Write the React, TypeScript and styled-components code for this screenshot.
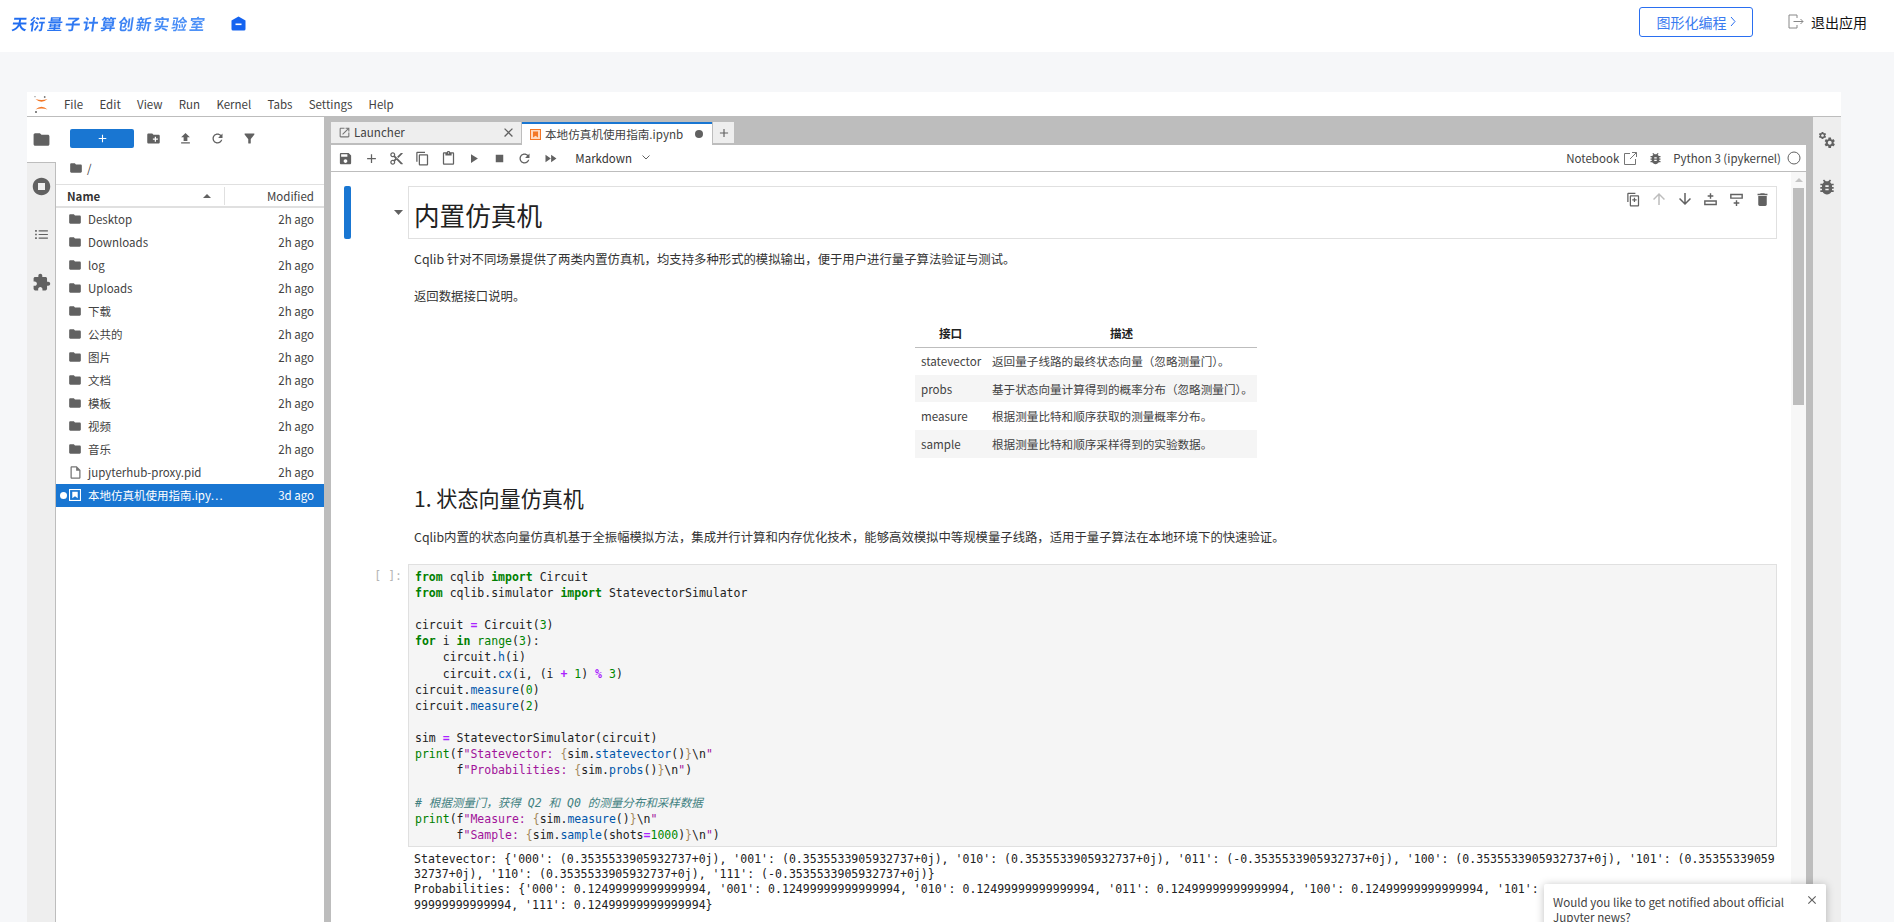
import React from 'react';
import styled, { createGlobalStyle } from 'styled-components';

const Global = createGlobalStyle`
  html, body { margin: 0; padding: 0; height: 100%; overflow: hidden; background: #f6f7f9; }
  body { font-family: "Noto Sans CJK SC", "Noto Sans", sans-serif; color: #424242; }
  #root { height: 100%; }
  * { box-sizing: border-box; }
`;

const P = {
  folder: 'M10 4H4c-1.1 0-1.99.9-1.99 2L2 18c0 1.1.9 2 2 2h16c1.1 0 2-.9 2-2V8c0-1.1-.9-2-2-2h-8l-2-2z',
  newFolder: 'M20 6h-8l-2-2H4c-1.11 0-1.99.89-1.99 2L2 18c0 1.11.89 2 2 2h16c1.11 0 2-.89 2-2V8c0-1.11-.89-2-2-2zm-1 8h-3v3h-2v-3h-3v-2h3V9h2v3h3v2z',
  upload: 'M9 16h6v-6h4l-7-7-7 7h4zm-4 2h14v2H5z',
  refresh: 'M17.65 6.35C16.2 4.9 14.21 4 12 4c-4.42 0-7.99 3.58-7.99 8s3.57 8 7.99 8c3.73 0 6.84-2.55 7.73-6h-2.08c-.82 2.33-3.04 4-5.65 4-3.31 0-6-2.69-6-6s2.69-6 6-6c1.66 0 3.14.69 4.22 1.78L13 11h7V4l-2.35 2.35z',
  filter: 'M4.25 5.61C6.27 8.2 10 13 10 13v6c0 .55.45 1 1 1h2c.55 0 1-.45 1-1v-6s3.72-4.8 5.74-7.39c.51-.66.04-1.61-.79-1.61H5.04c-.83 0-1.3.95-.79 1.61z',
  stopCircle: 'M12 2C6.48 2 2 6.48 2 12s4.48 10 10 10 10-4.48 10-10S17.52 2 12 2zm4 14H8V8h8v8z',
  list: 'M8 6h13v1.6H8zM8 11.2h13v1.6H8zM8 16.4h13v1.6H8zM3 5.6h2.4V8H3zM3 10.8h2.4v2.4H3zM3 16h2.4v2.4H3z',
  extension: 'M20.5 11H19V7c0-1.1-.9-2-2-2h-4V3.5C13 2.12 11.88 1 10.5 1S8 2.12 8 3.5V5H4c-1.1 0-1.99.9-1.99 2v3.8H3.5c1.49 0 2.7 1.21 2.7 2.7s-1.21 2.7-2.7 2.7H2V20c0 1.1.9 2 2 2h3.8v-1.5c0-1.49 1.21-2.7 2.7-2.7 1.49 0 2.7 1.21 2.7 2.7V22H17c1.1 0 2-.9 2-2v-4h1.5c1.38 0 2.5-1.12 2.5-2.5S21.88 11 20.5 11z',
  file: 'M14 2H6c-1.1 0-2 .9-2 2v16c0 1.1.9 2 2 2h12c1.1 0 2-.9 2-2V8l-6-6zm4 18H6V4h7v5h5v11z',
  launch: 'M19 19H5V5h7V3H5c-1.11 0-2 .9-2 2v14c0 1.1.89 2 2 2h14c1.1 0 2-.9 2-2v-7h-2v7zM14 3v2h3.59l-9.83 9.83 1.41 1.41L19 6.41V10h2V3h-7z',
  save: 'M17 3H5c-1.11 0-2 .9-2 2v14c0 1.1.89 2 2 2h14c1.1 0 2-.9 2-2V7l-4-4zm-5 16c-1.66 0-3-1.34-3-3s1.34-3 3-3 3 1.34 3 3-1.34 3-3 3zm3-10H5V5h10v4z',
  add: 'M19 13h-6v6h-2v-6H5v-2h6V5h2v6h6v2z',
  cut: 'M9.64 7.64c.23-.5.36-1.05.36-1.64 0-2.21-1.79-4-4-4S2 3.79 2 6s1.79 4 4 4c.59 0 1.14-.13 1.64-.36L10 12l-2.36 2.36C7.14 14.13 6.59 14 6 14c-2.21 0-4 1.79-4 4s1.79 4 4 4 4-1.79 4-4c0-.59-.13-1.14-.36-1.64L12 14l7 7h3v-1L9.64 7.64zM6 8c-1.1 0-2-.89-2-2s.9-2 2-2 2 .89 2 2-.9 2-2 2zm0 12c-1.1 0-2-.89-2-2s.9-2 2-2 2 .89 2 2-.9 2-2 2zm6-7.5c-.28 0-.5-.22-.5-.5s.22-.5.5-.5.5.22.5.5-.22.5-.5.5zM19 3l-6 6 2 2 7-7V3z',
  copy: 'M16 1H4c-1.1 0-2 .9-2 2v14h2V3h12V1zm3 4H8c-1.1 0-2 .9-2 2v14c0 1.1.9 2 2 2h11c1.1 0 2-.9 2-2V7c0-1.1-.9-2-2-2zm0 16H8V7h11v14z',
  paste: 'M19 2h-4.18C14.4.84 13.3 0 12 0c-1.3 0-2.4.84-2.82 2H5c-1.1 0-2 .9-2 2v16c0 1.1.9 2 2 2h14c1.1 0 2-.9 2-2V4c0-1.1-.9-2-2-2zm-7 0c.55 0 1 .45 1 1s-.45 1-1 1-1-.45-1-1 .45-1 1-1zm7 18H5V4h2v3h10V4h2v16z',
  run: 'M8 5v14l11-7z',
  stop: 'M6 6h12v12H6z',
  ff: 'M4 18l8.5-6L4 6v12zm9-12v12l8.5-6L13 6z',
  bug: 'M20 8h-2.81c-.45-.78-1.07-1.45-1.82-1.96L17 4.41 15.59 3l-2.17 2.17C12.96 5.06 12.49 5 12 5c-.49 0-.96.06-1.41.17L8.41 3 7 4.41l1.62 1.63C7.88 6.55 7.26 7.22 6.81 8H4v2h2.09c-.05.33-.09.66-.09 1v1H4v2h2v1c0 .34.04.67.09 1H4v2h2.81c1.04 1.79 2.97 3 5.19 3s4.15-1.21 5.19-3H20v-2h-2.09c.05-.33.09-.66.09-1v-1h2v-2h-2v-1c0-.34-.04-.67-.09-1H20V8zm-6 8h-4v-2h4v2zm0-4h-4v-2h4v2z',
  gear: 'M19.14 12.94c.04-.3.06-.61.06-.94 0-.32-.02-.64-.07-.94l2.03-1.58c.18-.14.23-.41.12-.61l-1.92-3.32c-.12-.22-.37-.29-.59-.22l-2.39.96c-.5-.38-1.03-.7-1.62-.94l-.36-2.54c-.04-.24-.24-.41-.48-.41h-3.84c-.24 0-.43.17-.47.41l-.36 2.54c-.59.24-1.13.57-1.62.94l-2.39-.96c-.22-.08-.47 0-.59.22L2.74 8.87c-.12.21-.08.47.12.61l2.03 1.58c-.05.3-.09.63-.09.94s.02.64.07.94l-2.03 1.58c-.18.14-.23.41-.12.61l1.92 3.32c.12.22.37.29.59.22l2.39-.96c.5.38 1.03.7 1.62.94l.36 2.54c.05.24.24.41.48.41h3.84c.24 0 .44-.17.47-.41l.36-2.54c.59-.24 1.13-.56 1.62-.94l2.39.96c.22.08.47 0 .59-.22l1.92-3.32c.12-.22.07-.47-.12-.61l-2.01-1.58zM12 15.6c-1.98 0-3.6-1.62-3.6-3.6s1.62-3.6 3.6-3.6 3.6 1.62 3.6 3.6-1.62 3.6-3.6 3.6z',
  duplicate: 'M15 1H4c-1.1 0-2 .9-2 2v13h2V3h11V1zm4 4H8c-1.1 0-2 .9-2 2v14c0 1.1.9 2 2 2h11c1.1 0 2-.9 2-2V7c0-1.1-.9-2-2-2zm0 16H8V7h11v14zm-4.5-9.5V9h-2v2.5H10v2h2.5V16h2v-2.5H17v-2z',
  up: 'M4 12l1.41 1.41L11 7.83V20h2V7.83l5.58 5.59L20 12l-8-8-8 8z',
  down: 'M20 12l-1.41-1.41L13 16.17V4h-2v12.17l-5.58-5.59L4 12l8 8 8-8z',
  insertAbove: 'M11 3h2v3h3v2h-3v3h-2V8H8V6h3zM3 13h18v7H3zm2 2v3h14v-3z',
  insertBelow: 'M3 4h18v7H3zm2 2v3h14V6zM11 13h2v3h3v2h-3v3h-2v-3H8v-2h3z',
  trash: 'M6 19c0 1.1.9 2 2 2h8c1.1 0 2-.9 2-2V7H6v12zM19 4h-3.5l-1-1h-5l-1 1H5v2h14V4z',
  close: 'M19 6.41L17.59 5 12 10.59 6.41 5 5 6.41 10.59 12 5 17.59 6.41 19 12 13.41 17.59 19 19 17.59 13.41 12z',
};

const Svg = styled.svg<{ $s: number; $c?: string }>`
  width: ${p => p.$s}px;
  height: ${p => p.$s}px;
  fill: ${p => p.$c || '#616161'};
  flex: none;
  display: block;
`;
const Icon = ({ d, s = 16, c }: { d: string; s?: number; c?: string }) => (
  <Svg viewBox="0 0 24 24" $s={s} $c={c}><path d={d} /></Svg>
);

const Page = styled.div`
  height: 922px;
  display: flex;
  flex-direction: column;
  overflow: hidden;
  position: relative;
`;
const TopBar = styled.header`
  height: 52px;
  background: #fff;
  display: flex;
  align-items: center;
  padding: 0 27px 6px 12px;
  flex: none;
`;
const Brand = styled.div`
  font-size: 15.5px;
  font-weight: 700;
  letter-spacing: 2.25px;
  transform: skewX(-8deg);
  background: linear-gradient(90deg, #1f6cf0, #4f93f7);
  -webkit-background-clip: text;
  background-clip: text;
  color: transparent;
  white-space: nowrap;
`;
const BrandBadge = styled.div`
  margin-left: 24px;
  display: flex;
`;
const Spacer = styled.div`flex: 1;`;
const GraphButton = styled.div`
  width: 114px;
  height: 30px;
  margin-bottom: 3px;
  border: 1px solid #2a6ff0;
  border-radius: 3px;
  color: #3a7bf0;
  font-size: 14px;
  display: flex;
  align-items: center;
  justify-content: center;
  gap: 3px;
`;
const Logout = styled.div`
  margin-left: 35px;
  margin-bottom: 3px;
  display: flex;
  align-items: center;
  gap: 7px;
  font-size: 14px;
  color: #111;
`;
const Body = styled.div`
  flex: 1;
  min-height: 0;
  padding: 40px 53px 0 27px;
  display: flex;
`;
const Lab = styled.div`
  flex: 1;
  min-width: 0;
  display: flex;
  flex-direction: column;
`;
const MenuBar = styled.nav`
  height: 25px;
  flex: none;
  background: #fff;
  border-bottom: 1px solid #bdbdbd;
  display: flex;
  align-items: center;
  padding: 0 0 1px 6px;
  font-size: 11.5px;
`;
const LogoWrap = styled.div`
  width: 24px;
  margin-right: 7px;
  display: flex;
`;
const MenuItem = styled.span`
  margin-right: 16.3px;
  color: #424242;
`;
const LabBody = styled.div`
  flex: 1;
  min-height: 0;
  display: flex;
`;
const LeftRail = styled.aside`
  width: 29px;
  flex: none;
  display: flex;
  flex-direction: column;
  background: #eeeeee;
  border-right: 1px solid #bdbdbd;
`;
const RailTab = styled.div<{ $active?: boolean; $h: number }>`
  height: ${p => p.$h}px;
  display: flex;
  justify-content: center;
  align-items: center;
  background: ${p => (p.$active ? '#fff' : 'transparent')};
  ${p => p.$active && 'margin-right: -1px; border-bottom: 1px solid #bdbdbd;'}
`;
const FilePanel = styled.section`
  width: 268px;
  flex: none;
  background: #fff;
  display: flex;
  flex-direction: column;
  font-size: 11.5px;
`;
const FileToolbar = styled.div`
  height: 46px;
  display: flex;
  align-items: center;
  padding: 0 0 3px 14px;
`;
const NewButton = styled.div`
  width: 64px;
  height: 19px;
  background: #1976d2;
  border-radius: 2px;
  display: flex;
  align-items: center;
  justify-content: center;
  margin-right: 6px;
`;
const ToolSlot = styled.div<{ $w?: number }>`
  width: ${p => p.$w || 26}px;
  display: flex;
  justify-content: center;
  flex: none;
`;
const Crumbs = styled.div`
  height: 21px;
  display: flex;
  align-items: center;
  padding: 0 0 11px 13px;
  gap: 4px;
`;
const ListHead = styled.div`
  height: 24px;
  display: flex;
  align-items: center;
  border-top: 1px solid #e0e0e0;
  border-bottom: 2px solid #e0e0e0;
`;
const NameHead = styled.div`
  width: 169px;
  height: 18px;
  display: flex;
  align-items: center;
  justify-content: space-between;
  padding: 0 13px 0 11px;
  font-weight: 700;
  color: #333;
  border-right: 1px solid #e0e0e0;
`;
const ModHead = styled.div`
  flex: 1;
  text-align: right;
  padding-right: 10px;
`;
const Row = styled.div<{ $sel?: boolean }>`
  height: 23px;
  flex: none;
  display: flex;
  align-items: center;
  padding: 0 10px 1px 0;
  background: ${p => (p.$sel ? '#1976d2' : 'transparent')};
  color: ${p => (p.$sel ? '#fff' : '#424242')};
`;
const Dot = styled.span<{ $on?: boolean }>`
  width: 7px;
  height: 7px;
  margin: 0 1px 0 4px;
  border-radius: 50%;
  background: ${p => (p.$on ? '#fff' : 'transparent')};
  flex: none;
`;
const RowIcon = styled.span`
  width: 14px;
  margin-right: 6px;
  display: flex;
  justify-content: center;
  flex: none;
`;
const RowName = styled.span`
  flex: 1;
  min-width: 0;
  white-space: nowrap;
`;
const RowTime = styled.span`flex: none;`;
const Splitter = styled.div`
  width: 7px;
  flex: none;
  background: #bdbdbd;
`;
const Main = styled.main`
  flex: 1;
  min-width: 0;
  display: flex;
  flex-direction: column;
`;
const TabBar = styled.div`
  height: 28px;
  flex: none;
  background: #bdbdbd;
  display: flex;
  align-items: flex-end;
  padding-bottom: 2px;
`;
const Tab = styled.div<{ $active?: boolean; $w: number }>`
  width: ${p => p.$w}px;
  height: ${p => (p.$active ? 23 : 21)}px;
  margin-right: 1px;
  background: ${p => (p.$active ? '#fff' : '#eeeeee')};
  border-top: ${p => (p.$active ? '2px solid #1976d2' : '0')};
  display: flex;
  align-items: center;
  font-size: 11.6px;
  padding: 0 5px 1px ${p => (p.$active ? 8 : 7)}px;
  gap: ${p => (p.$active ? 4 : 3)}px;
  ${p => p.$active && 'margin-bottom: -2px;'}
`;
const TabTitle = styled.span`
  flex: 1;
  white-space: nowrap;
`;
const PlusTab = styled.div`
  width: 21px;
  height: 21px;
  background: #eeeeee;
  display: flex;
  align-items: center;
  justify-content: center;
`;
const NbToolbar = styled.div`
  height: 27px;
  flex: none;
  background: #fff;
  border-bottom: 1px solid #bdbdbd;
  display: flex;
  align-items: center;
  padding-left: 2px;
  font-size: 11.5px;
`;
const CellType = styled.div`
  margin-left: 12px;
  padding-bottom: 1px;
  display: flex;
  align-items: center;
  gap: 10px;
  color: #333;
`;
const KernelText = styled.span<{ $mr?: number }>`
  white-space: nowrap;
  padding-bottom: 1px;
  margin-right: ${p => p.$mr || 0}px;
`;
const NbScroll = styled.div`
  flex: 1;
  min-height: 0;
  background: #fff;
  display: flex;
  overflow: hidden;
`;
const NbContent = styled.div`
  flex: 1;
  min-width: 0;
  padding: 14px 14px 0 13px;
  display: flex;
  flex-direction: column;
  font-size: 12.37px;
  color: #333;
`;
const CellRow = styled.div<{ $mt?: number }>`
  display: flex;
  flex: none;
  margin-top: ${p => p.$mt || 0}px;
`;
const Collapser = styled.div`
  width: 7px;
  height: 53px;
  background: #1976d2;
  border-radius: 2px;
  flex: none;
`;
const Gutter = styled.div`
  width: 57px;
  flex: none;
  display: flex;
  justify-content: flex-end;
  align-items: center;
  padding-right: 5px;
`;
const TitleBox = styled.div`
  flex: 1;
  height: 53px;
  border: 1px solid #e0e0e0;
  padding: 3px 0 0 5px;
  display: flex;
  align-items: center;
  justify-content: space-between;
  position: relative;
`;
const H1 = styled.h1`
  margin: 0;
  font-size: 25.6px;
  font-weight: 400;
  color: #222;
`;
const CellTools = styled.div`
  position: absolute;
  right: 1px;
  top: 3px;
  display: flex;
  align-items: center;
  height: 18px;
`;
const Indented = styled.div`
  margin-left: 64px;
  padding-left: 6px;
`;
const Para = styled.p<{ $mt: number }>`
  margin: ${p => p.$mt}px 0 0;
  height: 20px;
  line-height: 20px;
  white-space: nowrap;
`;
const Table = styled.table`
  margin: 14px 0 0 501px;
  width: 342px;
  border-collapse: collapse;
  table-layout: fixed;
  font-size: 11.6px;
`;
const Th = styled.th<{ $w: number }>`
  width: ${p => p.$w}px;
  height: 27px;
  padding: 0 6px;
  font-weight: 700;
  text-align: center;
  color: #222;
  border-bottom: 1px solid #bdbdbd;
`;
const Tr = styled.tr<{ $odd?: boolean }>`
  height: 27.7px;
  background: ${p => (p.$odd ? '#f5f5f5' : '#fff')};
`;
const Td = styled.td`
  padding: 0 6px;
  white-space: nowrap;
  color: #424242;
`;
const H2 = styled.h2`
  margin: 25px 0 0;
  height: 30px;
  line-height: 30px;
  font-size: 21.1px;
  font-weight: 400;
  color: #222;
`;
const Prompt = styled.div`
  width: 64px;
  flex: none;
  text-align: right;
  padding: 4px 6px 0 0;
  font: 11.5px/16px "DejaVu Sans Mono", monospace;
  color: #b5b5b5;
`;
const CodeBox = styled.pre`
  flex: 1;
  margin: 0;
  height: 283px;
  background: #f5f5f5;
  border: 1px solid #e0e0e0;
  padding: 4px 6px;
  font: 11.5px/16.12px "DejaVu Sans Mono", "Noto Sans CJK SC", monospace;
  color: #212121;
  overflow: hidden;
`;
const Output = styled.pre`
  margin: 5px 0 0 70px;
  font: 11.54px/15.33px "DejaVu Sans Mono", monospace;
  color: #212121;
  white-space: pre;
`;
const Kw = styled.span`color: #008000; font-weight: 700;`;
const Bi = styled.span`color: #008000;`;
const Op = styled.span`color: #aa22ff; font-weight: 700;`;
const Num = styled.span`color: #008800;`;
const Pr = styled.span`color: #0055aa;`;
const St = styled.span`color: #a1139a;`;
const Br = styled.span`color: #a58a5c;`;
const Cm = styled.span`color: #408080; font-style: italic;`;
const ScrollTrack = styled.div`
  width: 15px;
  flex: none;
  background: #f7f7f7;
  padding: 0 2px;
  display: flex;
  flex-direction: column;
  align-items: center;
`;
const ScrollArrow = styled.div`
  width: 0;
  height: 0;
  margin-top: 6px;
  border-left: 4px solid transparent;
  border-right: 4px solid transparent;
  border-bottom: 4px solid #c4c4c4;
`;
const ScrollThumb = styled.div`
  width: 11px;
  height: 217px;
  margin-top: 6px;
  background: #bdbdbd;
`;
const RightRail = styled.aside`
  width: 28px;
  flex: none;
  background: #eeeeee;
  display: flex;
  flex-direction: column;
  align-items: center;
  padding-top: 14px;
  gap: 28px;
`;
const Toast = styled.div`
  position: absolute;
  left: 1544px;
  top: 884px;
  width: 282px;
  height: 80px;
  background: #fff;
  border-radius: 2px;
  box-shadow: 0 1px 8px rgba(0, 0, 0, 0.25);
  padding: 10.5px 34px 0 9px;
  font-size: 11.6px;
  line-height: 15.7px;
  color: #424242;
`;
const ToastClose = styled.div`
  position: absolute;
  right: 7px;
  top: 9px;
`;

const files: [string, string][] = [
  ['Desktop', '2h ago'], ['Downloads', '2h ago'], ['log', '2h ago'], ['Uploads', '2h ago'],
  ['下载', '2h ago'], ['公共的', '2h ago'], ['图片', '2h ago'], ['文档', '2h ago'],
  ['模板', '2h ago'], ['视频', '2h ago'], ['音乐', '2h ago'],
];
const menus = ['File', 'Edit', 'View', 'Run', 'Kernel', 'Tabs', 'Settings', 'Help'];
const rows = [
  ['statevector', '返回量子线路的最终状态向量（忽略测量门）。'],
  ['probs', '基于状态向量计算得到的概率分布（忽略测量门）。'],
  ['measure', '根据测量比特和顺序获取的测量概率分布。'],
  ['sample', '根据测量比特和顺序采样得到的实验数据。'],
];

const JupyterLogo = () => (
  <svg width="18" height="22" viewBox="0 0 18 22">
    <path d="M2.5 6Q8.5 11.5 14.5 6Q8.5 8 2.5 6z" fill="#f37726" />
    <path d="M2.5 16.5Q8.5 11 14.5 16.5Q8.5 14.5 2.5 16.5z" fill="#f37726" />
    <circle cx="11.7" cy="4" r=".9" fill="#757575" />
    <circle cx="2" cy="3.7" r=".6" fill="#757575" />
    <circle cx="3" cy="18.9" r="1" fill="#616161" />
  </svg>
);
const NotebookIcon = ({ bg, fg, s = 14 }: { bg: string; fg: string; s?: number }) => (
  <svg width={s} height={s} viewBox="0 0 22 22">
    <rect x="0" y="0" width="22" height="22" fill={bg} />
    <rect x="2" y="2" width="18" height="18" fill={fg} />
    <path d="M6 5h10v12l-5-3.5L6 17z" fill={bg} />
  </svg>
);

export default function App() {
  return (
    <Page>
      <Global />
      <TopBar>
        <Brand>天衍量子计算创新实验室</Brand>
        <BrandBadge>
          <svg width="15" height="15" viewBox="0 0 15 15">
            <path d="M7.5 0.5L14.5 4.5V13a1.5 1.5 0 0 1-1.5 1.5H2A1.5 1.5 0 0 1 .5 13V4.5z" fill="#1463f0" />
            <rect x="4.5" y="7.5" width="6" height="1.6" fill="#fff" />
          </svg>
        </BrandBadge>
        <Spacer />
        <GraphButton>图形化编程
          <svg width="6" height="11" viewBox="0 0 6 11" fill="none" stroke="#2a6ff0"><path d="M1 1l4 4.5L1 10" /></svg>
        </GraphButton>
        <Logout>
          <svg width="16" height="15" viewBox="0 0 16 15" fill="none" stroke="#888" strokeWidth="1">
            <path d="M9 4V1H1v13h8v-3" />
            <path d="M5.5 7.5H15M12.5 5l2.5 2.5L12.5 10" />
          </svg>
          退出应用
        </Logout>
      </TopBar>
      <Body>
        <Lab>
          <MenuBar>
            <LogoWrap><JupyterLogo /></LogoWrap>
            {menus.map(m => <MenuItem key={m}>{m}</MenuItem>)}
          </MenuBar>
          <LabBody>
            <LeftRail>
              <RailTab $active $h={46}><Icon d={P.folder} s={19} /></RailTab>
              <RailTab $h={47}><Icon d={P.stopCircle} s={21} /></RailTab>
              <RailTab $h={48}><Icon d={P.list} s={17} /></RailTab>
              <RailTab $h={48}><Icon d={P.extension} s={19} /></RailTab>
            </LeftRail>
            <FilePanel>
              <FileToolbar>
                <NewButton><Icon d={P.add} s={13} c="#fff" /></NewButton>
                <ToolSlot $w={26}><Icon d={P.newFolder} s={15} /></ToolSlot>
                <ToolSlot $w={38}><Icon d={P.upload} s={15} /></ToolSlot>
                <ToolSlot $w={26}><Icon d={P.refresh} s={15} /></ToolSlot>
                <ToolSlot $w={38}><Icon d={P.filter} s={15} /></ToolSlot>
              </FileToolbar>
              <Crumbs><Icon d={P.folder} s={14} /> /</Crumbs>
              <ListHead>
                <NameHead>Name
                  <svg width="8" height="4" viewBox="0 0 8 4"><path d="M0 4L4 0l4 4z" fill="#616161" /></svg>
                </NameHead>
                <ModHead>Modified</ModHead>
              </ListHead>
              {files.map(([n, t]) => (
                <Row key={n}>
                  <Dot />
                  <RowIcon><Icon d={P.folder} s={14} /></RowIcon>
                  <RowName>{n}</RowName>
                  <RowTime>{t}</RowTime>
                </Row>
              ))}
              <Row>
                <Dot />
                <RowIcon><Icon d={P.file} s={15} c="#757575" /></RowIcon>
                <RowName>jupyterhub-proxy.pid</RowName>
                <RowTime>2h ago</RowTime>
              </Row>
              <Row $sel>
                <Dot $on />
                <RowIcon><NotebookIcon bg="#fff" fg="#1976d2" s={12} /></RowIcon>
                <RowName>本地仿真机使用指南.ipy⋯</RowName>
                <RowTime>3d ago</RowTime>
              </Row>
            </FilePanel>
            <Splitter />
            <Main>
              <TabBar>
                <Tab $w={190}>
                  <Icon d={P.launch} s={13} c="#757575" />
                  <TabTitle>Launcher</TabTitle>
                  <Icon d={P.close} s={15} />
                </Tab>
                <Tab $active $w={190}>
                  <NotebookIcon bg="#f37726" fg="#ffd9bf" s={11} />
                  <TabTitle>本地仿真机使用指南.ipynb</TabTitle>
                  <svg width="14" height="8" viewBox="0 0 14 8"><circle cx="6" cy="4" r="4" fill="#616161" /></svg>
                </Tab>
                <PlusTab><Icon d={P.add} s={14} /></PlusTab>
              </TabBar>
              <NbToolbar>
                <ToolSlot $w={25.6}><Icon d={P.save} s={15} /></ToolSlot>
                <ToolSlot $w={25.6}><Icon d={P.add} s={15} /></ToolSlot>
                <ToolSlot $w={25.6}><Icon d={P.cut} s={15} /></ToolSlot>
                <ToolSlot $w={25.6}><Icon d={P.copy} s={15} /></ToolSlot>
                <ToolSlot $w={25.6}><Icon d={P.paste} s={15} /></ToolSlot>
                <ToolSlot $w={25.6}><Icon d={P.run} s={15} /></ToolSlot>
                <ToolSlot $w={25.6}><Icon d={P.stop} s={15} /></ToolSlot>
                <ToolSlot $w={25.6}><Icon d={P.refresh} s={15} /></ToolSlot>
                <ToolSlot $w={25.6}><Icon d={P.ff} s={15} /></ToolSlot>
                <CellType>Markdown
                  <svg width="8" height="5" viewBox="0 0 8 5" fill="none" stroke="#616161"><path d="M.5.5L4 4l3.5-3.5" /></svg>
                </CellType>
                <Spacer />
                <KernelText $mr={4}>Notebook</KernelText>
                <ToolSlot $w={14}>
                  <svg width="13" height="13" viewBox="0 0 13 13" fill="none" stroke="#757575" strokeWidth="1">
                    <path d="M6 1.5H.5v11h11V7M8 .5h4.5V5M12.5.5L6 7" />
                  </svg>
                </ToolSlot>
                <ToolSlot $w={36}><Icon d={P.bug} s={15} /></ToolSlot>
                <KernelText>Python 3 (ipykernel)</KernelText>
                <ToolSlot $w={25}>
                  <svg width="14" height="14" viewBox="0 0 14 14" fill="none" stroke="#616161"><circle cx="7" cy="7" r="6" /></svg>
                </ToolSlot>
              </NbToolbar>
              <NbScroll>
                <NbContent>
                  <CellRow>
                    <Collapser />
                    <Gutter>
                      <svg width="9" height="5" viewBox="0 0 9 5"><path d="M0 0h9L4.5 5z" fill="#616161" /></svg>
                    </Gutter>
                    <TitleBox>
                      <H1>内置仿真机</H1>
                      <CellTools>
                        <ToolSlot $w={25.7}><Icon d={P.duplicate} s={15} /></ToolSlot>
                        <ToolSlot $w={25.7}><Icon d={P.up} s={18} c="#bdbdbd" /></ToolSlot>
                        <ToolSlot $w={25.7}><Icon d={P.down} s={18} /></ToolSlot>
                        <ToolSlot $w={25.7}><Icon d={P.insertAbove} s={17} /></ToolSlot>
                        <ToolSlot $w={25.7}><Icon d={P.insertBelow} s={17} /></ToolSlot>
                        <ToolSlot $w={25.7}><Icon d={P.trash} s={17} /></ToolSlot>
                      </CellTools>
                    </TitleBox>
                  </CellRow>
                  <Indented>
                    <Para $mt={10}>Cqlib 针对不同场景提供了两类内置仿真机，均支持多种形式的模拟输出，便于用户进行量子算法验证与测试。</Para>
                    <Para $mt={17}>返回数据接口说明。</Para>
                    <Table>
                      <thead>
                        <tr><Th $w={71}>接口</Th><Th $w={271}>描述</Th></tr>
                      </thead>
                      <tbody>
                        {rows.map((r, i) => (
                          <Tr key={r[0]} $odd={i % 2 === 1}><Td>{r[0]}</Td><Td>{r[1]}</Td></Tr>
                        ))}
                      </tbody>
                    </Table>
                    <H2>1. 状态向量仿真机</H2>
                    <Para $mt={14}>Cqlib内置的状态向量仿真机基于全振幅模拟方法，集成并行计算和内存优化技术，能够高效模拟中等规模量子线路，适用于量子算法在本地环境下的快速验证。</Para>
                  </Indented>
                  <CellRow $mt={17}>
                    <Prompt>[ ]:</Prompt>
                    <CodeBox><Kw>from</Kw> cqlib <Kw>import</Kw> Circuit{'\n'}
<Kw>from</Kw> cqlib.simulator <Kw>import</Kw> StatevectorSimulator{'\n\n'}
circuit <Op>=</Op> Circuit(<Num>3</Num>){'\n'}
<Kw>for</Kw> i <Kw>in</Kw> <Bi>range</Bi>(<Num>3</Num>):{'\n'}
{'    '}circuit.<Pr>h</Pr>(i){'\n'}
{'    '}circuit.<Pr>cx</Pr>(i, (i <Op>+</Op> <Num>1</Num>) <Op>%</Op> <Num>3</Num>){'\n'}
circuit.<Pr>measure</Pr>(<Num>0</Num>){'\n'}
circuit.<Pr>measure</Pr>(<Num>2</Num>){'\n\n'}
sim <Op>=</Op> StatevectorSimulator(circuit){'\n'}
<Bi>print</Bi>(f<St>"Statevector: </St><Br>{'{'}</Br>sim.<Pr>statevector</Pr>()<Br>{'}'}</Br>\n<St>"</St>{'\n'}
{'      '}f<St>"Probabilities: </St><Br>{'{'}</Br>sim.<Pr>probs</Pr>()<Br>{'}'}</Br>\n<St>"</St>){'\n\n'}
<Cm># 根据测量门，获得 Q2 和 Q0 的测量分布和采样数据</Cm>{'\n'}
<Bi>print</Bi>(f<St>"Measure: </St><Br>{'{'}</Br>sim.<Pr>measure</Pr>()<Br>{'}'}</Br>\n<St>"</St>{'\n'}
{'      '}f<St>"Sample: </St><Br>{'{'}</Br>sim.<Pr>sample</Pr>(shots<Op>=</Op><Num>1000</Num>)<Br>{'}'}</Br>\n<St>"</St>)</CodeBox>
                  </CellRow>
                  <Output>{`Statevector: {'000': (0.3535533905932737+0j), '001': (0.3535533905932737+0j), '010': (0.3535533905932737+0j), '011': (-0.3535533905932737+0j), '100': (0.3535533905932737+0j), '101': (0.35355339059
32737+0j), '110': (0.3535533905932737+0j), '111': (-0.3535533905932737+0j)}
Probabilities: {'000': 0.12499999999999994, '001': 0.12499999999999994, '010': 0.12499999999999994, '011': 0.12499999999999994, '100': 0.12499999999999994, '101': 0.12499999999999994, '110': 0.124
99999999999994, '111': 0.12499999999999994}`}</Output>
                </NbContent>
                <ScrollTrack>
                  <ScrollArrow />
                  <ScrollThumb />
                </ScrollTrack>
              </NbScroll>
            </Main>
            <Splitter />
            <RightRail>
              <svg width="18" height="18" viewBox="0 0 24 24" fill="#616161">
                <g transform="translate(7 7) scale(.72)"><path d={P.gear} /></g>
                <g transform="translate(0 0) scale(.5)"><path d={P.gear} /></g>
              </svg>
              <Icon d={P.bug} s={20} />
            </RightRail>
          </LabBody>
        </Lab>
      </Body>
      <Toast>
        Would you like to get notified about official Jupyter news?
        <ToastClose><Icon d={P.close} s={14} /></ToastClose>
      </Toast>
    </Page>
  );
}
